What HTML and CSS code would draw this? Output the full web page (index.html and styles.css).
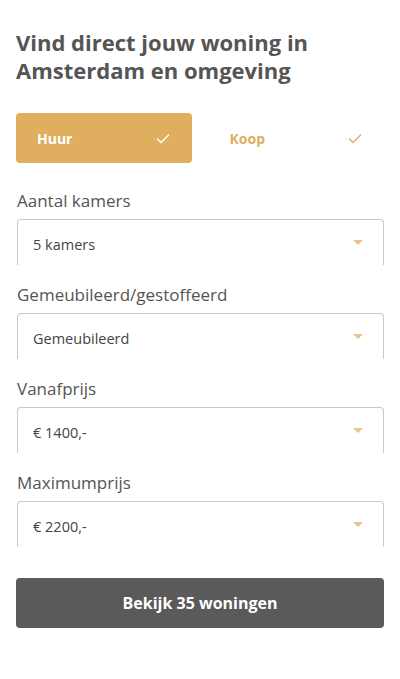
FILE: index.html
```html
<!DOCTYPE html>
<html lang="nl">
<head>
  <meta charset="UTF-8">
  <meta name="viewport" content="width=device-width, initial-scale=1.0">
  <title>Vind direct jouw woning</title>
  <link rel="stylesheet" href="styles.css">
</head>
<body>

<main class="search">
  <h1>Vind direct jouw woning in Amsterdam en omgeving</h1>

  <!-- Huur / Koop toggle -->
  <div class="toggle">
    <button class="toggle-option active">
      <span>Huur</span>
      <svg class="check" width="14" height="11" viewBox="0 0 14 11"><path d="M1 5.5 L5 9.5 L13 1.5" fill="none" stroke="currentColor" stroke-width="1.4"/></svg>
    </button>
    <button class="toggle-option">
      <span>Koop</span>
      <svg class="check" width="14" height="11" viewBox="0 0 14 11"><path d="M1 5.5 L5 9.5 L13 1.5" fill="none" stroke="currentColor" stroke-width="1.4"/></svg>
    </button>
  </div>

  <div class="field">
    <label>Aantal kamers</label>
    <div class="select">
      <span>5 kamers</span>
      <span class="caret"></span>
    </div>
  </div>

  <div class="field">
    <label>Gemeubileerd/gestoffeerd</label>
    <div class="select">
      <span>Gemeubileerd</span>
      <span class="caret"></span>
    </div>
  </div>

  <div class="field">
    <label>Vanafprijs</label>
    <div class="select">
      <span>€ 1400,-</span>
      <span class="caret"></span>
    </div>
  </div>

  <div class="field">
    <label>Maximumprijs</label>
    <div class="select">
      <span>€ 2200,-</span>
      <span class="caret"></span>
    </div>
  </div>

  <button class="submit">Bekijk 35 woningen</button>
</main>

</body>
</html>
```

FILE: styles.css
```css
body {
  margin: 0;
  background: #fff;
  font-family: "Open Sans", "Noto Sans", sans-serif;
  color: #555;
}
.search {
  padding: 28px 16px 40px;
}
h1 {
  margin: 0 0 29px;
  font-size: 22px;
  line-height: 28px;
  font-weight: 700;
  color: #555;
}
/* Huur / Koop toggle */
.toggle {
  display: grid;
  grid-template-columns: 1fr 1fr;
  gap: 17px;
  margin-bottom: 26px;
}
.toggle-option {
  display: flex;
  align-items: center;
  justify-content: space-between;
  height: 50px;
  padding: 0 22px 0 21px;
  border: none;
  border-radius: 4px;
  background: transparent;
  color: #dfae60;
  font-family: inherit;
  font-size: 14px;
  font-weight: 700;
}
.toggle-option.active {
  background: #dfae5f;
  color: #fff;
}
.field {
  margin-bottom: 18px;
}
.field label {
  display: block;
  margin: 0 0 6px 1px;
  font-size: 17px;
  line-height: 24px;
  color: #555;
}
.select {
  display: flex;
  align-items: center;
  justify-content: space-between;
  height: 46px;
  padding: 0 20px 0 15px;
  margin-left: 1px;
  border: 1px solid #c9c9c9;
  border-bottom: none;
  border-radius: 4px 4px 0 0;
  box-sizing: border-box;
  font-size: 14.5px;
  color: #444;
}
.select span:first-child {
  margin-top: 4px;
}
.caret {
  width: 0;
  height: 0;
  border-left: 5px solid transparent;
  border-right: 5px solid transparent;
  border-top: 5px solid #e8c48c;
}
.submit {
  display: block;
  width: 100%;
  height: 50px;
  margin-top: 31px;
  border: none;
  border-radius: 4px;
  background: #5a5a5a;
  color: #fff;
  font-family: inherit;
  font-size: 16px;
  font-weight: 700;
}
```
